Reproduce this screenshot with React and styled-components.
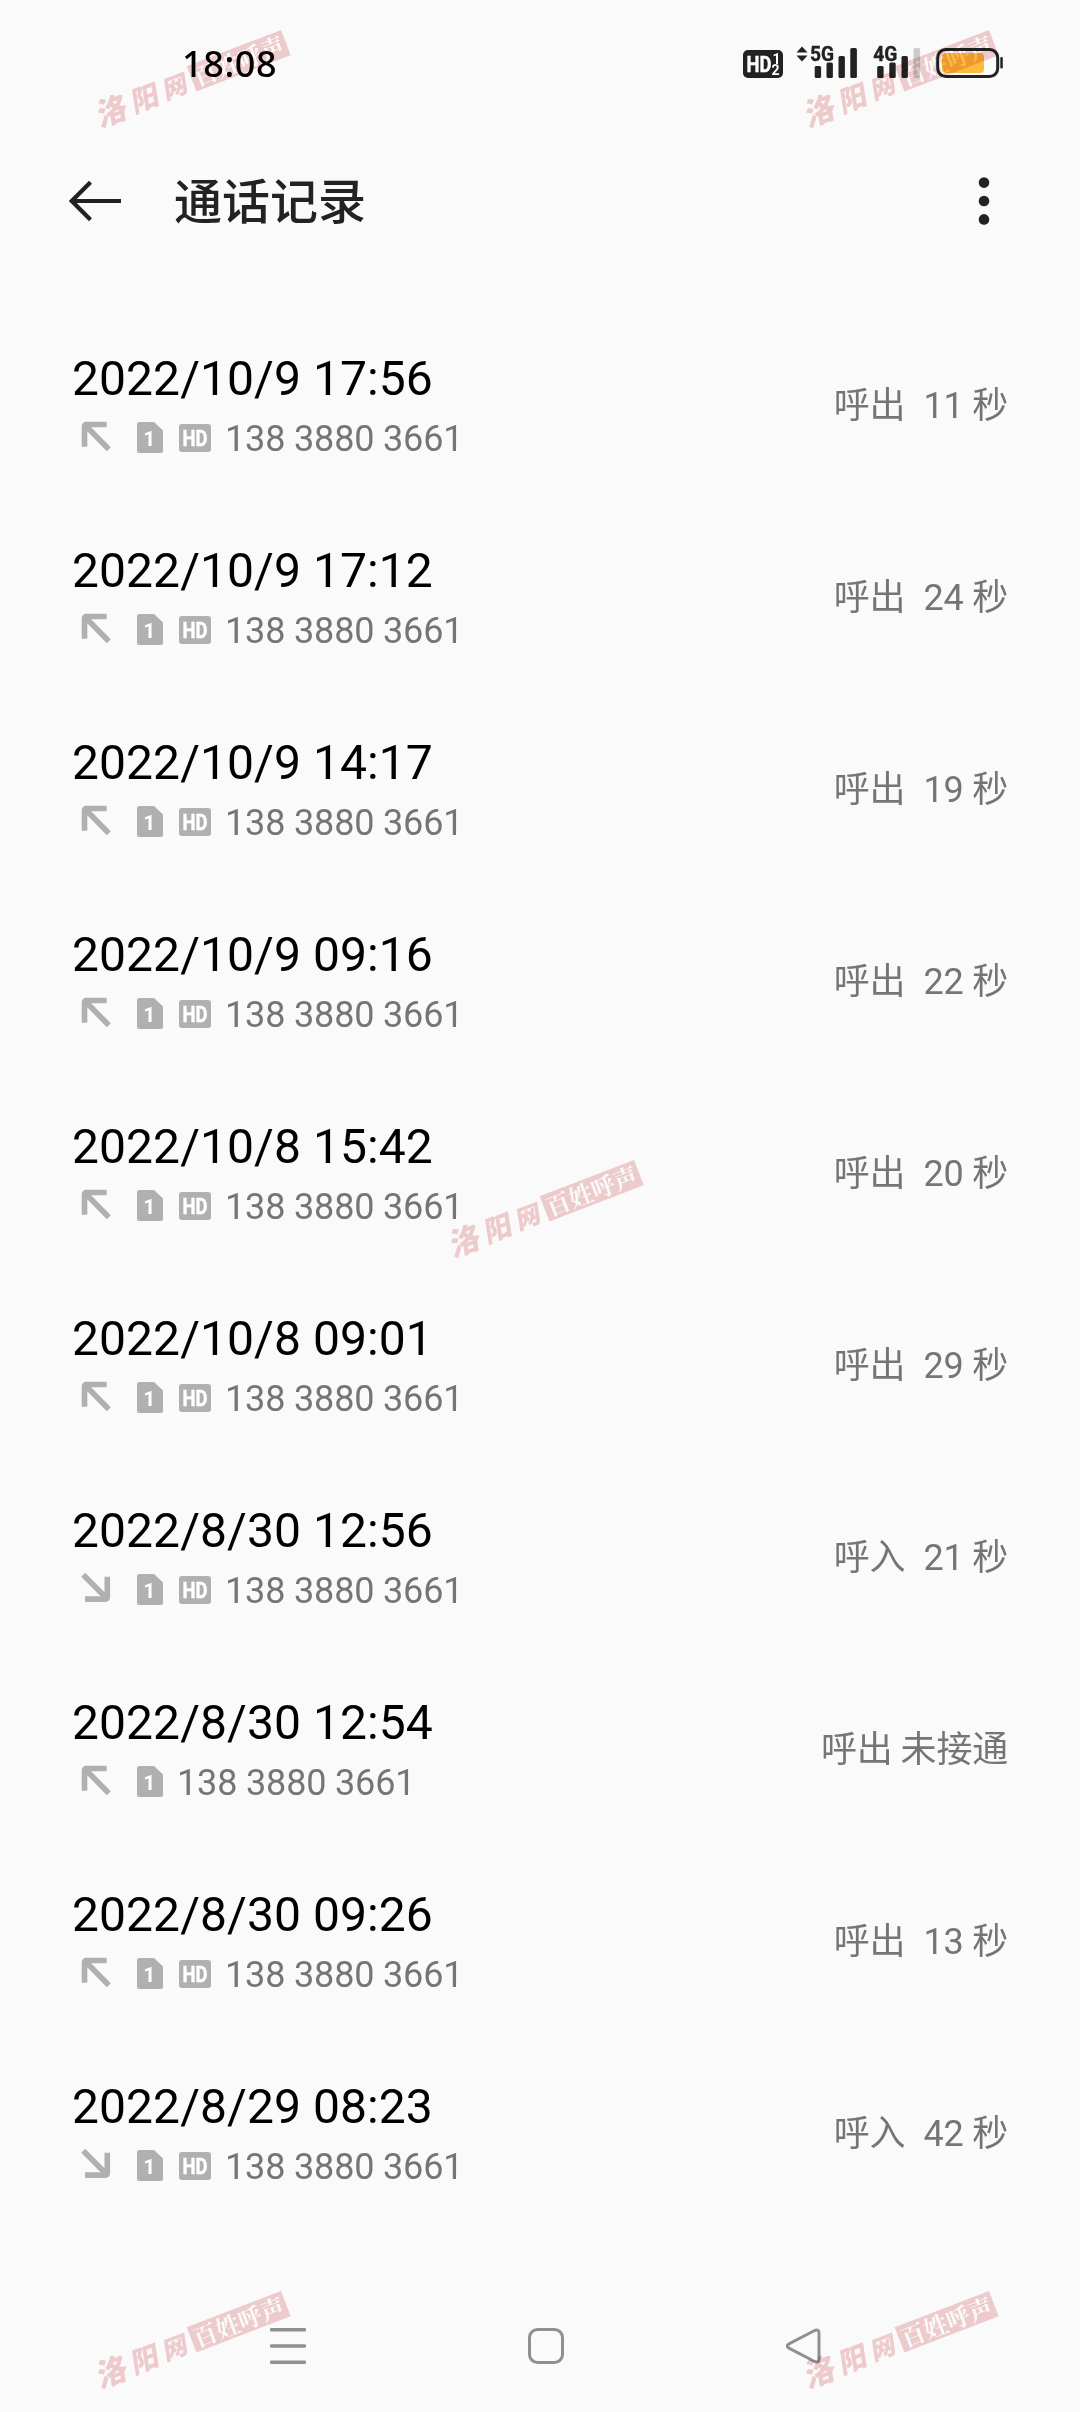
import styled, { createGlobalStyle } from "styled-components";

const phone = "138 3880 3661";

const calls = [
  { date: "2022/10/9 17:56", type: "out", label: "呼出", duration: "11 秒", hd: true },
  { date: "2022/10/9 17:12", type: "out", label: "呼出", duration: "24 秒", hd: true },
  { date: "2022/10/9 14:17", type: "out", label: "呼出", duration: "19 秒", hd: true },
  { date: "2022/10/9 09:16", type: "out", label: "呼出", duration: "22 秒", hd: true },
  { date: "2022/10/8 15:42", type: "out", label: "呼出", duration: "20 秒", hd: true },
  { date: "2022/10/8 09:01", type: "out", label: "呼出", duration: "29 秒", hd: true },
  { date: "2022/8/30 12:56", type: "in", label: "呼入", duration: "21 秒", hd: true },
  { date: "2022/8/30 12:54", type: "out", label: "呼出", missed: "未接通", hd: false },
  { date: "2022/8/30 09:26", type: "out", label: "呼出", duration: "13 秒", hd: true },
  { date: "2022/8/29 08:23", type: "in", label: "呼入", duration: "42 秒", hd: true },
];

// top right corner of each stamp
const stamps = [
  { x: 281, y: 30 },
  { x: 989, y: 30 },
  { x: 634, y: 1160 },
  { x: 281, y: 2291 },
  { x: 989, y: 2291 },
];

const StatusIcons = () => (
  <svg width="262" height="60" viewBox="743 33 262 60">
    <rect x="743" y="50" width="40" height="28" rx="5" fill="#222" />
    <g fill="#fff" fontFamily="Roboto, sans-serif" fontWeight="700">
      <text
        x="746.5"
        y="72"
        fontSize="22"
        textLength="25"
        lengthAdjust="spacingAndGlyphs"
        stroke="#fff"
        strokeWidth="0.4"
      >
        HD
      </text>
      <text x="772.5" y="63.5" fontSize="14">1</text>
      <text x="771.5" y="75" fontSize="14">2</text>
    </g>

    <g fill="#222">
      <path d="M802 46.5l5.5 6h-11zM802 61.5l5.5-6h-11z" />
      <rect x="814.7" y="66" width="6.4" height="12" rx="1.5" />
      <rect x="826.5" y="62.5" width="6.4" height="15.5" rx="1.5" />
      <rect x="838.5" y="56" width="6.4" height="22" rx="1.5" />
      <rect x="850.3" y="48" width="6.6" height="30" rx="1.5" />
      <rect x="877.2" y="66" width="6.4" height="12" rx="1.5" />
      <rect x="889.3" y="62.5" width="6.4" height="15.5" rx="1.5" />
      <rect x="901.5" y="56" width="6.4" height="22" rx="1.5" />
      <rect x="913.5" y="48" width="6.6" height="30" rx="1.5" fill="#ccc" />
    </g>
    <g
      fill="#222"
      stroke="#222"
      strokeWidth="0.4"
      fontFamily="Roboto, sans-serif"
      fontWeight="700"
      fontSize="21"
    >
      <text x="810" y="61" textLength="24" lengthAdjust="spacingAndGlyphs">5G</text>
      <text x="873.3" y="61" textLength="24" lengthAdjust="spacingAndGlyphs">4G</text>
    </g>

    <rect x="937.7" y="49.5" width="60" height="27" rx="8" fill="none" stroke="#222" strokeWidth="3" />
    <rect x="942" y="53" width="42" height="20" rx="4" fill="#fbbb3c" />
    <rect x="1000.3" y="57" width="2.5" height="11.5" rx="1" fill="#222" />
  </svg>
);

const BackIcon = () => (
  <svg width="53" height="42" viewBox="0 0 53 42" fill="none" stroke="#222" strokeWidth="4.2">
    <path d="M52 21H3M21.5 2.3L2.8 21l18.7 18.7" />
  </svg>
);

const MoreIcon = () => (
  <svg width="12" height="48" viewBox="0 0 12 48" fill="#222">
    <circle cx="6" cy="5.6" r="5.3" />
    <circle cx="6" cy="24" r="5.3" />
    <circle cx="6" cy="42.4" r="5.3" />
  </svg>
);

const ArrowIcon = ({ type }) => (
  <svg width="30" height="42" viewBox="0 0 30 42" fill="none" stroke="#b0b0b0" strokeWidth="5.6">
    {type === "out" ? (
      <path d="M3.5 28.7V8.5q0-2 2-2h20.2M4.5 7.5l23.3 23.8" />
    ) : (
      <path d="M26.3 6.7v20.4q0 2-2 2H4M2.2 4.8l23.3 23.5" />
    )}
  </svg>
);

const SimIcon = () => (
  <svg width="26" height="42" viewBox="0 0 26 42">
    <path d="M2.5 4H17l9 8.5v20q0 2.5-2.5 2.5h-21Q0 35 0 32.5v-26Q0 4 2.5 4z" fill="#b0b0b0" />
    <text x="6.3" y="27.5" fill="#fff" fontFamily="Roboto, sans-serif" fontWeight="700" fontSize="21">1</text>
  </svg>
);

const HdIcon = () => (
  <svg width="32" height="42" viewBox="0 0 32 42">
    <rect y="6" width="32" height="28" rx="3" fill="#b0b0b0" />
    <text
      x="3.5"
      y="27.7"
      fill="#fff"
      stroke="#fff"
      strokeWidth="0.4"
      fontFamily="Roboto, sans-serif"
      fontWeight="700"
      fontSize="21.5"
      textLength="25"
      lengthAdjust="spacingAndGlyphs"
    >
      HD
    </text>
  </svg>
);

const App = () => {
  return (
    <Screen>
      <GlobalStyle />
      <StatusBar>
        <Clock>18:08</Clock>
        <StatusIcons />
      </StatusBar>

      <Header>
        <BackIcon />
        <Title>通话记录</Title>
        <MoreIcon />
      </Header>

      <CallList>
        {calls.map((call) => (
          <CallRow key={call.date}>
            <CallInfo>
              <CallDate>{call.date}</CallDate>
              <CallMeta>
                <ArrowIcon type={call.type} />
                <Badges>
                  <SimIcon />
                  {call.hd && <HdIcon />}
                </Badges>
                <Phone>{phone}</Phone>
              </CallMeta>
            </CallInfo>
            <CallResult $missed={!!call.missed}>
              <span>{call.label}</span>
              <span>{call.missed || call.duration}</span>
            </CallResult>
          </CallRow>
        ))}
      </CallList>

      <NavBar>
        <svg width="36" height="36" viewBox="0 0 36 36" stroke="#909090" strokeWidth="3.4" strokeLinecap="round">
          <path d="M1.5 1.7h33M1.5 18h33M1.5 34.3h33" />
        </svg>
        <svg width="36" height="36" viewBox="0 0 36 36" fill="none" stroke="#909090" strokeWidth="3">
          <rect x="1.5" y="1.5" width="33" height="33" rx="8" />
        </svg>
        <svg width="36" height="36" viewBox="0 0 36 36" fill="none" stroke="#909090" strokeWidth="3">
          <path d="M3.4 15.6L28.6 2.5q4.400-1.800 4.400 2.500v26q0 4.300-4.400 2.500L3.4 20.400q-4.300-2.400 0-4.800z" />
        </svg>
      </NavBar>

      {stamps.map((stamp, index) => (
        <Stamp key={index} $x={stamp.x} $y={stamp.y}>
          <StampSite>
            <StampChar $size={31}>洛</StampChar>
            <StampChar $size={28}>阳</StampChar>
            <StampChar $size={25}>网</StampChar>
          </StampSite>
          <StampBox>百姓呼声</StampBox>
        </Stamp>
      ))}
    </Screen>
  );
};

const GlobalStyle = createGlobalStyle`
  * {
    box-sizing: border-box;
  }

  body {
    margin: 0;
    background: #fafafa;
  }

  svg {
    display: block;
    flex-shrink: 0;
  }
`;

const Screen = styled.div`
  position: relative;
  display: flex;
  flex-direction: column;
  width: 1080px;
  height: 2412px;
  overflow: hidden;
  background: #fafafa;
  font-family: Roboto, "Noto Sans CJK SC", sans-serif;
`;

const StatusBar = styled.div`
  display: flex;
  justify-content: space-between;
  align-items: center;
  height: 126px;
  padding: 0 75px 0 182px;
`;

const Clock = styled.div`
  padding-top: 1px;
  font-family: "Noto Sans", sans-serif;
  font-size: 36px;
  font-weight: 500;
  line-height: 42px;
  letter-spacing: 0.6px;
  color: #000;
`;

const Header = styled.header`
  display: flex;
  align-items: center;
  height: 150px;
  padding: 0 90px 0 69px;
`;

const Title = styled.h1`
  flex: 1;
  margin: 0 0 0 52px;
  padding-bottom: 7px;
  font-family: "Noto Sans CJK SC", sans-serif;
  font-size: 48px;
  font-weight: 500;
  line-height: 60px;
  color: #222;
`;

const CallList = styled.main`
  flex: 1;
  padding-top: 33px;
`;

const CallRow = styled.div`
  display: flex;
  justify-content: space-between;
  align-items: center;
  height: 192px;
  padding: 0 72px;
`;

const CallInfo = styled.div`
  display: flex;
  flex-direction: column;
  gap: 11px;
  padding-top: 1px;
`;

const CallDate = styled.div`
  font-size: 48px;
  line-height: 56px;
  letter-spacing: 0.06px;
  color: #000;
`;

const CallMeta = styled.div`
  display: flex;
  gap: 14px;
  padding-left: 9px;
`;

const Badges = styled.div`
  display: flex;
  gap: 16px;
  margin-left: 12px;
`;

const Phone = styled.div`
  font-size: 36px;
  line-height: 42px;
  letter-spacing: -0.16px;
  color: #757575;
`;

const CallResult = styled.div`
  display: flex;
  gap: ${(props) => (props.$missed ? "8px" : "18px")};
  padding-top: 2px;
  font-size: 36px;
  line-height: 42px;
  letter-spacing: -0.2px;
  color: #757575;
`;

const NavBar = styled.nav`
  display: flex;
  align-items: center;
  gap: 222px;
  height: 132px;
  padding-left: 270px;
`;

const Stamp = styled.div`
  position: absolute;
  top: ${(props) => props.$y}px;
  right: ${(props) => 1080 - props.$x}px;
  display: flex;
  align-items: center;
  height: 27px;
  transform: rotate(-21deg);
  transform-origin: top right;
  mix-blend-mode: multiply;
`;

const StampSite = styled.div`
  display: flex;
  align-items: center;
  gap: 6px;
  margin-right: 5px;
  color: #f2cfd0;
`;

const StampChar = styled.span`
  font-size: ${(props) => props.$size}px;
  font-weight: 900;
  line-height: 27px;
  transform: translateY(2px) skewX(-12deg);
`;

const StampBox = styled.div`
  width: 101px;
  height: 27px;
  background: #f2cfd0;
  color: #fff;
  font-family: "Noto Serif CJK SC", "Noto Sans CJK SC", serif;
  font-size: 24px;
  font-weight: 700;
  line-height: 26px;
  text-align: center;
  white-space: nowrap;
`;

export default App;
